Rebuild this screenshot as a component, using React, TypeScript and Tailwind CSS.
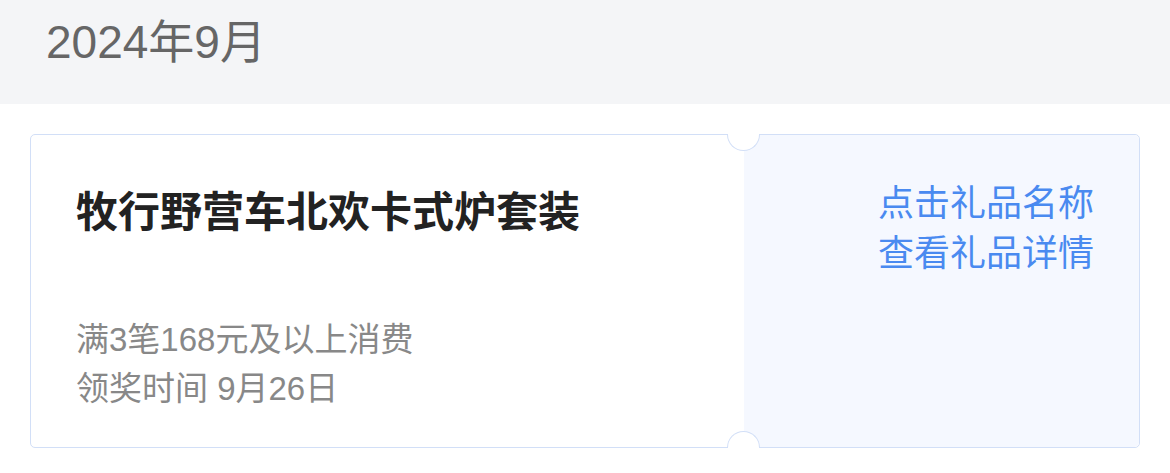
export default function App() {
  return (
    <div className="w-[1170px] h-[473px] bg-white font-['Liberation_Sans','Noto_Sans_CJK_SC',sans-serif]">
      {/* month header */}
      <div className="h-[104px] bg-[#f4f5f7] pl-[46px] flex items-center pb-[20px]">
        <span className="text-[46px] text-[#666666] leading-none">2024年9月</span>
      </div>

      {/* gift ticket */}
      <div className="px-[30px] pt-[30px]">
        <div className="relative flex h-[314px] rounded-[5px] border border-[#d2dff7] bg-white">
          <div className="w-[713px] pl-[45px] pt-[53px]">
            <div className="text-[42px] font-bold leading-[50px] text-[#222222]">牧行野营车北欢卡式炉套装</div>
            <div className="mt-[77px] text-[33px] leading-[49px] text-[#888888]">
              <div>满3笔168元及以上消费</div>
              <div>领奖时间 9月26日</div>
            </div>
          </div>
          <div className="flex-1 rounded-r-[5px] bg-[#f5f8ff] pt-[44px] pr-[45px] text-right text-[36px] leading-[50px] text-[#4a8af0]">
            <div>点击礼品名称</div>
            <div>查看礼品详情</div>
          </div>

          {/* notches */}
          <div className="absolute left-[696px] top-[-1px] h-[17px] w-[33px] rounded-b-full border border-t-0 border-[#d2dff7] bg-white" />
          <div className="absolute left-[696px] bottom-[-1px] h-[17px] w-[33px] rounded-t-full border border-b-0 border-[#d2dff7] bg-white" />
        </div>
      </div>
    </div>
  );
}
